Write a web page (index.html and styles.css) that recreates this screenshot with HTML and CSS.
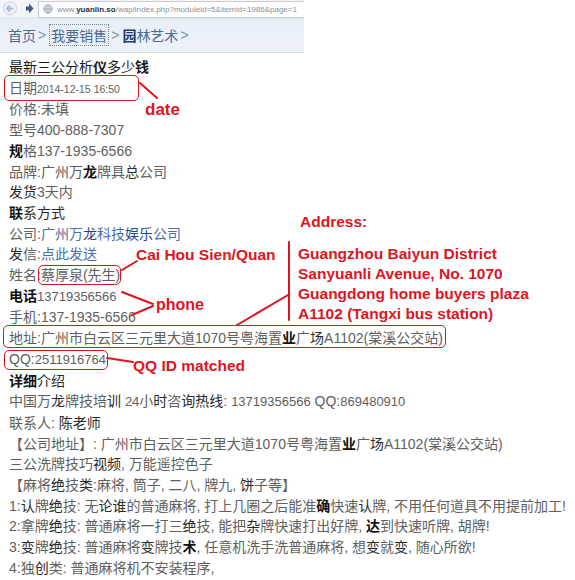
FILE: index.html
```html
<!DOCTYPE html>
<html lang="zh">
<head>
<meta charset="utf-8">
<title>yuanlin</title>
<link rel="stylesheet" href="styles.css">
</head>
<body>
<div class="page">
  <div class="chrome">
    <svg class="nav" width="38" height="17" viewBox="0 0 38 17">
      <circle cx="10" cy="8.5" r="6.5" fill="#eef1f5" stroke="#c9d1db"/>
      <path d="M13.5 8.5H7.5M10 5.5L7 8.5L10 11.5" fill="none" stroke="#a9bfd8" stroke-width="2"/>
      <path d="M26 6.5h3v-3l4.5 5l-4.5 5v-3h-3z" fill="#3f5f86"/>
    </svg>
    <div class="url">
      <svg class="globe" width="10" height="10" viewBox="0 0 10 10">
        <circle cx="5" cy="5" r="4.3" fill="#d9dde2" stroke="#9aa3ad" stroke-width=".8"/>
        <path d="M1 5h8M5 .8c-2 2.5-2 5.9 0 8.4M5 .8c2 2.5 2 5.9 0 8.4" fill="none" stroke="#9aa3ad" stroke-width=".7"/>
      </svg>
      <span class="u1">www.</span><span class="u2">yuanlin.so</span><span class="u1">/wap/index.php?moduleid=5&amp;itemid=1986&amp;page=1</span>
    </div>
  </div>
  <div class="crumbs">
    <span>首页</span><span class="gt">&gt;</span><span class="focus">我要销售</span><span class="gt">&gt;</span><span><b class="cb">园</b>林艺术</span><span class="gt">&gt;</span>
  </div>
  <div class="content">
    <div class="title">最新三公分析<b>仪</b>多少<b>钱</b></div>
    <div>日期<span class="small">2014-12-15 16:50</span></div>
    <div>价格:未填</div>
    <div>型号400-888-7307</div>
    <div><b class="k">规</b>格137-1935-6566</div>
    <div>品牌:广州万<b class="k">龙</b>牌具<span class="d">总</span>公司</div>
    <div><span class="d">发货</span>3天内</div>
    <div class="d"><b class="k">联</b>系方式</div>
    <div>公司:<span class="link">广州万<span class="ld">龙</span>科技<span class="ld">娱乐</span>公司</span></div>
    <div><span class="d">发</span>信:<span class="link">点此发送</span></div>
    <div>姓名:蔡厚泉(先生)</div>
    <div><b class="k">电话</b><span class="n">13719356566</span></div>
    <div>手机:137-1935-6566</div>
    <div>地址:广州市白云区三元里大道1070号粤海置<b class="k">业</b>广<span class="d">场</span>A1102(棠溪公交站)</div>
    <div>QQ:<span class="n">2511916764</span></div>
    <div class="d"><b class="k">详细</b>介绍</div>
    <div>中国万<span class="d">龙</span>牌技培<span class="d">训</span> <span class="n">24</span>小<span class="d">时</span>咨<span class="d">询热线</span>: <span class="n">13719356566</span> QQ:<span class="n">869480910</span></div>
    <div>联系人: <span class="d">陈老师</span></div>
    <div>【公司地址】: 广州市白云区三元里大道1070号粤海置<b class="k">业</b>广<span class="d">场</span>A1102(棠溪公交站)</div>
    <div>三公洗牌技巧<span class="d">视频</span>, 万能遥控色子</div>
    <div>【麻将<span class="d">绝</span>技<span class="d">类</span>:麻将, 筒子, 二八, 牌九, <span class="d">饼</span>子等】</div>
    <div>1:<span class="d">认</span>牌<span class="d">绝</span>技: 无<span class="d">论谁</span>的普通麻将, 打上几圈之后能准<b class="k">确</b>快速<span class="d">认</span>牌, 不用任何道具不用提前加工!</div>
    <div>2:拿牌<span class="d">绝</span>技: 普通麻将一打三<span class="d">绝</span>技, 能把<span class="d">杂</span>牌快速打出好牌, <b class="k">达</b>到快速听牌, 胡牌!</div>
    <div>3:<span class="d">变</span>牌<span class="d">绝</span>技: 普通麻将<span class="d">变</span>牌技<b class="k">术</b>, 任意机洗手洗普通麻将, 想<span class="d">变</span>就<span class="d">变</span>, 随心所欲!</div>
    <div>4:独<span class="d">创</span>类: 普通麻将机不安装程序,</div>
  </div>

  <div class="box box-date"></div>
  <div class="box box-name"></div>
  <div class="box box-addr"></div>
  <div class="box box-qq"></div>

  <svg class="lines" width="575" height="580" viewBox="0 0 575 580">
    <g fill="none" stroke="#e0141e" stroke-width="2" stroke-linecap="round">
      <path d="M140 83L157 98"/>
      <path d="M122 270L137 261"/>
      <path d="M122 292L153 304M132 315L153 306"/>
      <path d="M107 358L133 362"/>
      <path d="M289 242V320M288 295L237 325"/>
    </g>
  </svg>

  <div class="note note-date">date</div>
  <div class="note note-name">Cai Hou Sien/Quan</div>
  <div class="note note-phone">phone</div>
  <div class="note note-qq">QQ ID matched</div>
  <div class="note note-addr">
    <div class="addr-h">Address:</div>
    <div>Guangzhou Baiyun District</div>
    <div>Sanyuanli Avenue, No. 1070</div>
    <div>Guangdong home buyers plaza</div>
    <div>A1102 (Tangxi bus station)</div>
  </div>
</div>
</body>
</html>
```

FILE: styles.css
```css
html, body {
  margin: 0;
  padding: 0;
  background: #fff;
}
.page {
  position: relative;
  width: 575px;
  height: 580px;
  overflow: hidden;
  font-family: "Liberation Sans", "Noto Sans CJK SC", sans-serif;
}
.chrome {
  display: flex;
  align-items: center;
  width: 304px;
  height: 17px;
  background: #f3f5f8;
}
.nav {
  flex: none;
  display: block;
}
.url {
  flex: 1;
  display: flex;
  align-items: center;
  height: 15px;
  margin-top: 1px;
  padding-left: 4px;
  background: #fff;
  border: 1px solid #c8ced6;
  border-right: none;
  font-size: 8px;
  white-space: nowrap;
  overflow: hidden;
}
.globe {
  flex: none;
  margin-right: 4px;
}
.u1 { color: #8a8f96; }
.u2 { color: #2b2f36; font-weight: bold; }

.crumbs {
  display: flex;
  align-items: center;
  width: 296px;
  height: 35px;
  padding-left: 8px;
  background: linear-gradient(#dfe7f1 0, #e9eff7 4px, #eef3fa 100%);
  border-bottom: 1px solid #d2dbe6;
  font-family: "Noto Sans CJK SC", sans-serif;
  font-size: 14px;
  color: #4a6a94;
}
.crumbs .gt {
  font-family: "Liberation Sans", sans-serif;
  font-size: 14px;
  color: #7f93ad;
  margin: 0 3px 0 2px;
}
.crumbs .focus {
  border: 1px dotted #7b8799;
  padding: 0 1px;
  line-height: 20px;
}
.crumbs .cb {
  color: #1d3c6c;
}

.content {
  padding: 4px 0 0 9px;
  font-size: 14px;
  line-height: 20.7px;
  color: #606060;
  white-space: nowrap;
}
.content b { font-weight: bold; }
.title {
  color: #1a1a1a;
}
.k { color: #111; }
.d { color: #2a2a2a; }
.n { font-size: 13px; }
.small {
  font-size: 10.5px;
  color: #606060;
}
.link { color: #4c6ea6; }
.ld { color: #22458a; }

.box {
  position: absolute;
  border: 1.5px solid #e0141e;
  border-radius: 5px;
  box-sizing: border-box;
}
.box-date { left: 4px; top: 75px; width: 135px; height: 26px; }
.box-name { left: 38px; top: 265px; width: 83px; height: 20px; }
.box-addr { left: 3px; top: 325px; width: 443px; height: 23px; }
.box-qq { left: 4px; top: 350px; width: 104px; height: 20px; }

.lines {
  position: absolute;
  left: 0;
  top: 0;
  pointer-events: none;
}
.note {
  position: absolute;
  color: #e0141e;
  font-family: "Liberation Sans", sans-serif;
  font-weight: bold;
  font-size: 15.5px;
  line-height: 20px;
  white-space: nowrap;
}
.note-date { left: 145px; top: 100px; font-size: 17px; }
.note-name { left: 136px; top: 245px; }
.note-phone { left: 156px; top: 295px; font-size: 16px; }
.note-qq { left: 133px; top: 356px; }
.note-addr { left: 298px; top: 212px; }
.addr-h { margin-left: 2px; margin-bottom: 12px; }
```
